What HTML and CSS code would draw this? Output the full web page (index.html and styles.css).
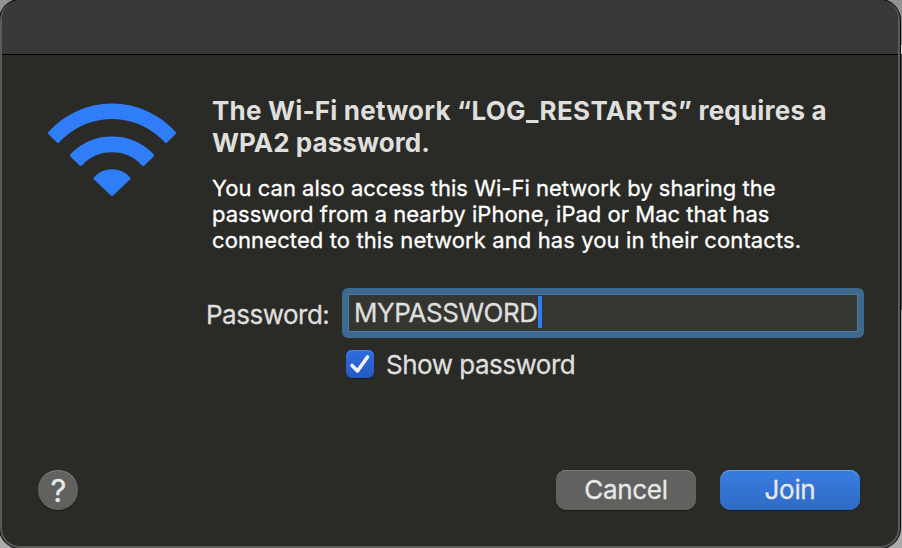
FILE: index.html
```
<!DOCTYPE html>
<html lang="en">
<head>
<meta charset="utf-8">
<title>Wi-Fi</title>
<link rel="stylesheet" href="styles.css">
</head>
<body>
<main class="dialog">
  <header class="titlebar"></header>
  <section class="content">
    <svg class="wifi" viewBox="0 0 132 96">
      <path d="M3.4 30A84.200 84.200 0 0 1 128.6 30L120 38.500A72.700 72.700 0 0 0 12 38.500Z"/>
      <path d="M25.4 52.400A56 56 0 0 1 106.600 52.400L97.300 61.500A42.300 42.300 0 0 0 34.700 61.500Z"/>
      <path d="M49 75.500A22.500 22.500 0 0 1 83 75.500L66 91.500Z"/>
    </svg>
    <div class="copy">
      <h1><span class="t1">The Wi-Fi network <span class="ssid">“LOG_RESTARTS”</span> requires a</span><br><span class="t2">WPA2 password.</span></h1>
      <p><span class="p1">You can also access this Wi-Fi network by sharing the</span><br><span class="p2">password from a nearby iPhone, iPad or Mac that has</span><br><span class="p3">connected to this network and has you in their contacts.</span></p>
    </div>
  </section>
  <section class="form">
    <span class="label">Password:</span>
    <div class="field"><span class="value">MYPASSWORD</span><i class="caret"></i></div>
    <div class="option">
      <span class="check"><svg viewBox="0 0 28 28"><path d="M6 15.500L11.500 21L21.500 7"/></svg></span>
      <span class="show">Show password</span>
    </div>
  </section>
  <footer class="actions">
    <button class="help">?</button>
    <button class="btn cancel">Cancel</button>
    <button class="btn join">Join</button>
  </footer>
</main>
</body>
</html>
```
FILE: styles.css
```
* { box-sizing: border-box; }
body {
  margin: 0;
  width: 902px;
  height: 548px;
  overflow: hidden;
  background: linear-gradient(#929292 0 45px, #e2e2e2 45px 54px, #555 54px 310px, #aaa 310px);
  font-family: Inter, "Liberation Sans", sans-serif;
  color: #dfdfde;
}
.dialog {
  width: 900px;
  height: 548px;
  display: flex;
  flex-direction: column;
  border: 2px solid #5a5a58;
  border-top: 0;
  border-radius: 20px;
  background: #2a2a26;
  overflow: hidden;
  box-shadow: 0 0 0 1px #080808;
}
.titlebar {
  flex: none;
  height: 55px;
  background: #393937;
  border-bottom: 1px solid #000;
}
.content {
  display: flex;
  height: 233px;
  padding: 40px 0 0 44px;
}
.wifi {
  width: 132px;
  height: 96px;
  margin-top: 8px;
  fill: #2f7ef7;
  stroke: #2f7ef7;
  stroke-width: 3;
  stroke-linejoin: round;
}
.copy { margin-left: 34px; white-space: nowrap; }
h1 { margin: 0; font-size: 26px; line-height: 32px; font-weight: 700; }
.t1 { letter-spacing: 0.2px; }
.ssid { letter-spacing: 0.33px; }
.t2 { letter-spacing: 0.05px; }
p { margin: 16px 0 0; font-size: 22px; line-height: 26px; color: #fff; -webkit-text-stroke: 0.3px; }
.p1, .p2 { letter-spacing: 0.02px; }
.p3 { letter-spacing: 0.11px; }
.form {
  display: grid;
  grid-template-columns: 136px 522px;
  grid-template-rows: 50px 50px;
  margin-left: 204px;
  font-size: 26px;
  white-space: nowrap;
  -webkit-text-stroke: 0.3px;
}
.label { line-height: 53px; letter-spacing: -0.5px; }
.field {
  display: flex;
  border: 6px solid #3e698f;
  border-radius: 6px;
  background: #353531;
  box-shadow: inset 0 0 0 1px #4d7da6;
  padding-left: 6px;
}
.value { line-height: 38px; letter-spacing: -0.45px; }
.caret { width: 4px; height: 32px; margin-top: 2px; background: #2f7ef7; border-radius: 1px; }
.option { grid-column: 2; display: flex; padding: 12px 0 0 4px; }
.check {
  width: 28px;
  height: 28px;
  border-radius: 6px;
  background: linear-gradient(#2f6ddd, #2559c3);
  box-shadow: inset 0 1px #5285e3, 0 1px 1px #1b1b19;
}
.check svg { display: block; fill: none; stroke: #eef2fb; stroke-width: 3.6; stroke-linecap: round; stroke-linejoin: round; }
.show { margin-left: 12px; line-height: 30px; letter-spacing: -0.5px; }
.actions { display: flex; margin: 82px 38px 0 36px; }
button { font-family: inherit; color: #e8e8e7; border: 0; padding: 0; height: 40px; font-size: 26px; -webkit-text-stroke: 0.3px; }
.help {
  width: 40px;
  border-radius: 50%;
  background: #61615f;
  font-size: 31px;
  padding-left: 1px;
  margin-right: auto;
  box-shadow: inset 0 1px #7c7c7a, 0 1px 1px #1b1b19;
}
.btn { width: 140px; border-radius: 10px; line-height: 38px; padding-bottom: 1px; }
.cancel { background: #61615f; margin-right: 24px; letter-spacing: -0.3px; box-shadow: inset 0 1px #7c7c7a, 0 1px 1px #1b1b19; }
.join { background: linear-gradient(#377de1, #2f6bc5); letter-spacing: -0.3px; box-shadow: inset 0 1px #6a9fe9, 0 1px 1px #1b1b19; }
```
